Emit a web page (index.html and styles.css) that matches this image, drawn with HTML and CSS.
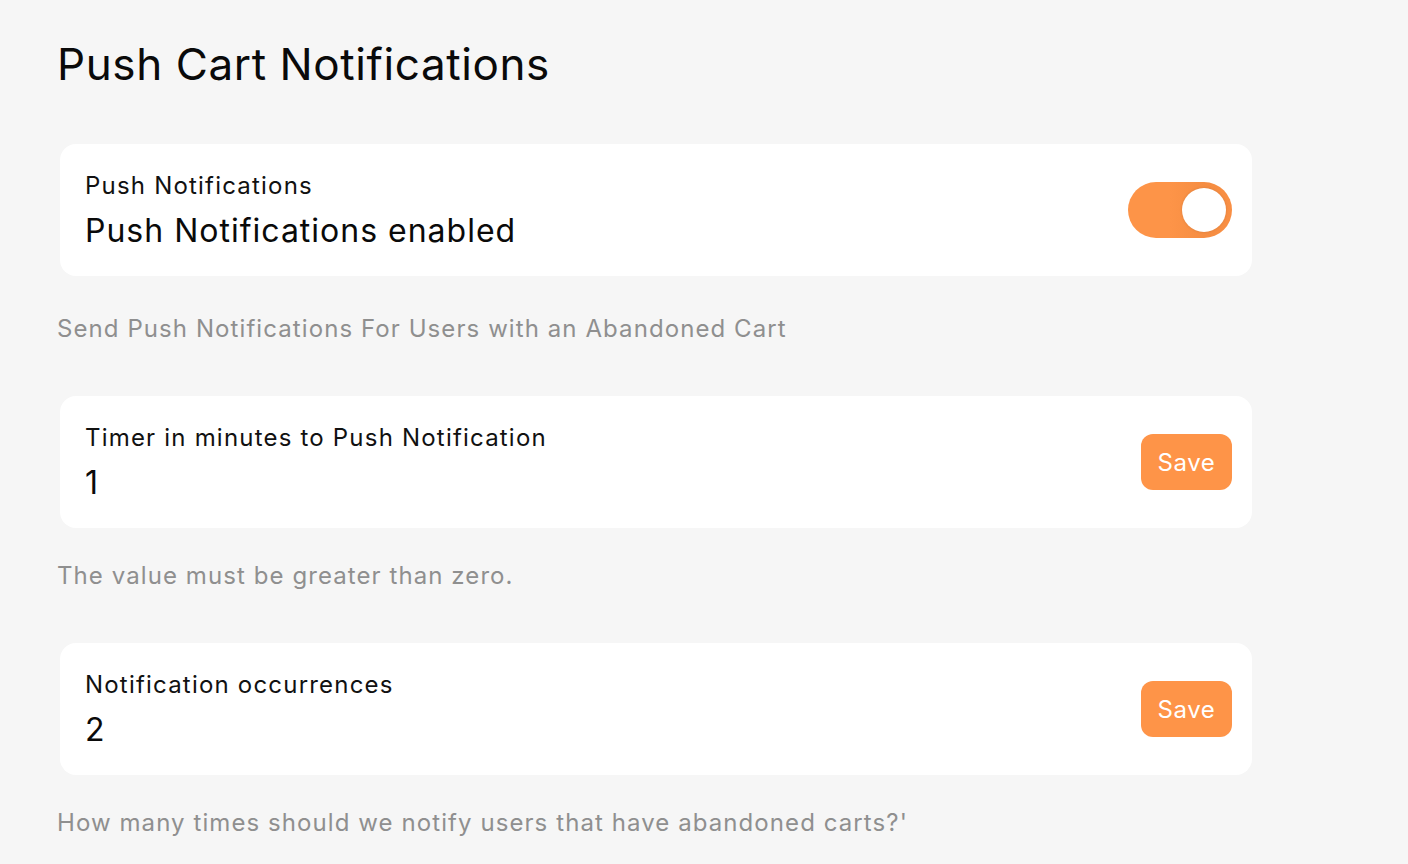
FILE: index.html
```html
<!DOCTYPE html>
<html lang="en">
<head>
<meta charset="utf-8">
<title>Push Cart Notifications</title>
<link rel="stylesheet" href="styles.css">
</head>
<body>
<main class="page">
  <h1 class="title">Push Cart Notifications</h1>

  <section class="field">
    <div class="card">
      <div class="card-text">
        <div class="label">Push Notifications</div>
        <div class="value">Push Notifications enabled</div>
      </div>
      <div class="toggle" role="switch" aria-checked="true"><span class="knob"></span></div>
    </div>
    <p class="helper helper-first">Send Push Notifications For Users with an Abandoned Cart</p>
  </section>

  <section class="field">
    <div class="card">
      <div class="card-text">
        <div class="label">Timer in minutes to Push Notification</div>
        <div class="value">1</div>
      </div>
      <button class="save">Save</button>
    </div>
    <p class="helper">The value must be greater than zero.</p>
  </section>

  <section class="field">
    <div class="card">
      <div class="card-text">
        <div class="label">Notification occurrences</div>
        <div class="value">2</div>
      </div>
      <button class="save">Save</button>
    </div>
    <p class="helper">How many times should we notify users that have abandoned carts?'</p>
  </section>
</main>
</body>
</html>
```

FILE: styles.css
```css
* { box-sizing: border-box; }
html, body { margin: 0; padding: 0; }
body {
  background: #f6f6f6;
  font-family: Inter, "Noto Sans", sans-serif;
  color: #111;
}
.page {
  padding: 32px 0 0 57px;
  width: 1252px;
}
.title {
  margin: 0 0 48px 0;
  font-size: 44px;
  font-weight: 400;
  line-height: 64px;
  letter-spacing: 0.6px;
  color: #0a0a0a;
}
.field { display: flex; flex-direction: column; }
.card {
  margin-left: 3px;
  height: 132px;
  background: #fff;
  border-radius: 16px;
  display: flex;
  align-items: center;
  justify-content: space-between;
  padding: 4px 20px 0 25px;
}
.card-text { display: flex; flex-direction: column; }
.label {
  font-size: 24px;
  line-height: 30px;
  letter-spacing: 1.2px;
  color: #111;
}
.value {
  margin-top: 8px;
  font-size: 32px;
  line-height: 44px;
  letter-spacing: 1px;
  color: #0a0a0a;
}
.toggle {
  width: 104px;
  height: 56px;
  margin-top: -4px;
  border-radius: 28px;
  background: linear-gradient(90deg, #fd9448 0%, #fd9448 40%, #f58d42 75%, #f98f44 100%);
  display: flex;
  align-items: center;
  justify-content: flex-end;
  padding-right: 6px;
}
.knob {
  width: 44px;
  height: 44px;
  border-radius: 50%;
  background: #fff;
  box-shadow: 0 0 3px rgba(0,0,0,0.12);
}
.save {
  width: 91px;
  height: 56px;
  margin-top: -4px;
  border: 0;
  border-radius: 12px;
  background: #fe9448;
  color: #fff;
  font-family: inherit;
  font-size: 24px;
  letter-spacing: 0.6px;
  padding: 0;
}
.helper {
  margin: 33px 0 52px 0;
  font-size: 24px;
  line-height: 30px;
  letter-spacing: 1.08px;
  color: #8f8f8f;
}
.helper-first { margin-top: 38px; }
```
